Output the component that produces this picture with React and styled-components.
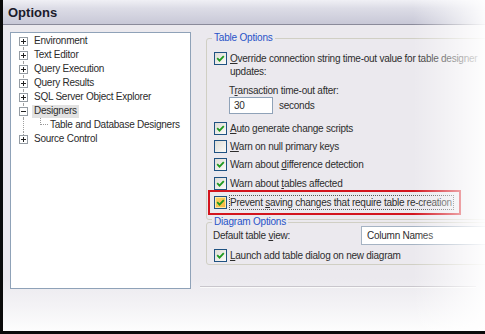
import React from 'react';
import styled, { createGlobalStyle } from 'styled-components';

const Global = createGlobalStyle`
  html, body { margin: 0; padding: 0; background: #fff; overflow: hidden; }
  body { font-family: "Liberation Sans", Arial, sans-serif; }
`;

const Window = styled.div`
  position: relative;
  width: 485px;
  height: 334px;
  box-sizing: border-box;
  border-left: 3px solid #0b0b0b;
  border-bottom: 3px solid #0b0b0b;
  display: flex;
  flex-direction: column;
  overflow: hidden;
  background: linear-gradient(to bottom, #ebe9ee 0%, #ebe9ee 84%, #f3f2f5 92%, #fdfdfd 100%);
`;

const TitleBar = styled.div`
  height: 25px;
  flex: none;
  box-sizing: border-box;
  background: linear-gradient(to bottom, #f0f0f5 0%, #dcdce6 35%, #c8c8d7 100%);
  border-bottom: 1px solid #8a8a9a;
  display: flex;
  align-items: center;
  padding-left: 5px;
  font-weight: bold;
  font-size: 13px;
  color: #1b1b2b;
`;

const Body = styled.div`
  flex: 1;
  display: flex;
  align-items: flex-start;
`;

const Tree = styled.div`
  margin: 7px 0 0 7px;
  width: 181px;
  height: 257px;
  box-sizing: border-box;
  background: #fff;
  border: 1px solid #8fa2b8;
  padding-top: 1px;
  flex: none;
`;

const TreeRow = styled.div`
  position: relative;
  height: 14px;
  display: flex;
  align-items: center;
  white-space: nowrap;
  padding-left: ${p => (p.$child ? 29 : 8)}px;
  font-size: 10px;
  letter-spacing: -0.25px;
  color: #2b2b2b;
  &::before {
    content: '';
    position: absolute;
    left: 12px;
    top: ${p => (p.$first ? 7 : 0)}px;
    bottom: ${p => (p.$last ? 7 : 0)}px;
    border-left: 1px dotted #a0a0a0;
  }
`;

const Expander = styled.span`
  position: relative;
  z-index: 1;
  width: 9px;
  height: 9px;
  box-sizing: border-box;
  border: 1px solid #959ca3;
  background: #fff;
  display: flex;
  align-items: center;
  justify-content: center;
  margin-right: 4px;
  flex: none;
`;

const Connector = styled.span`
  width: 8px;
  height: 7px;
  margin-top: -7px;
  box-sizing: border-box;
  border-left: 1px dotted #9a9a9a;
  border-bottom: 1px dotted #9a9a9a;
  flex: none;
`;

const TreeText = styled.span`
  padding: 0 2px 1px 2px;
  line-height: 12px;
  background: ${p => (p.$selected ? '#e2e2e2' : 'transparent')};
`;

const Right = styled.div`
  margin-left: 15px;
  width: 290px;
  flex: none;
  display: flex;
  flex-direction: column;
`;

const Group = styled.div`
  position: relative;
  margin-top: ${p => p.$mt}px;
  border: 1px solid #d0cfc4;
  border-radius: 3px;
  padding: ${p => p.$pad};
  display: flex;
  flex-direction: column;
`;

const Legend = styled.span`
  position: absolute;
  top: -7px;
  left: 5px;
  padding: 0 2px;
  font-size: 10px;
  line-height: 12px;
  letter-spacing: -0.2px;
  color: #2853c8;
  background: #ebe9ee;
`;

const Row = styled.div`
  display: flex;
  align-items: ${p => (p.$center ? 'center' : 'flex-start')};
  gap: ${p => p.$gap || 3}px;
  margin-top: ${p => p.$mt || 0}px;
  margin-left: ${p => p.$ml || 0}px;
  font-size: 10px;
  line-height: 13px;
  letter-spacing: -0.25px;
  white-space: nowrap;
  color: #2d2d2d;
`;

const Box = styled.span`
  width: 13px;
  height: 13px;
  box-sizing: border-box;
  flex: none;
  border: 1px solid #1f5282;
  background: ${p =>
    p.$hot
      ? 'linear-gradient(135deg, #fbd86a 0%, #f6b13a 100%)'
      : 'linear-gradient(135deg, #dedcd5 0%, #fbfbf9 100%)'};
  display: flex;
  align-items: center;
  justify-content: center;
  box-shadow: ${p => (p.$hot ? 'inset 0 0 0 1px #fde9a6' : 'none')};
`;

const Label = styled.span`
  outline: ${p => (p.$focus ? '1px dotted #555' : 'none')};
  outline-offset: 0;
  padding-right: ${p => (p.$focus ? 1 : 0)}px;
`;

const TextField = styled.span`
  width: 44px;
  height: 17px;
  box-sizing: border-box;
  border: 1px solid #8fa2b8;
  background: #fff;
  padding-left: 4px;
  display: flex;
  align-items: center;
`;

const Combo = styled.span`
  width: 140px;
  height: 19px;
  box-sizing: border-box;
  border: 1px solid #a5b3c3;
  background: #fff;
  padding-left: 5px;
  display: flex;
  align-items: center;
`;

const FieldLabel = styled.span`
  width: 145px;
  flex: none;
`;

const FocusBox = styled.div`
  margin-left: -6px;
  width: 253px;
  box-sizing: border-box;
  border: 2px solid #d3141e;
  padding: 4px 4px;
`;

const Separator = styled.div`
  margin-top: 21px;
  margin-left: -6px;
  width: 276px;
  border-top: 1px solid #c9c6cc;
  border-bottom: 1px solid #fafafa;
`;

const Fade = styled.div`
  position: absolute;
  top: 0;
  right: 0;
  bottom: 0;
  width: 72px;
  pointer-events: none;
  background: linear-gradient(to right, rgba(255, 255, 255, 0) 0%, rgba(255, 255, 255, 0.35) 40%, rgba(255, 255, 255, 0.92) 100%);
`;

const Check = () => (
  <svg width="9" height="9" viewBox="0 0 9 9">
    <polyline points="1.2,4.2 3.5,6.6 7.8,2.1" fill="none" stroke="#1f9a1f" strokeWidth="1.8" />
  </svg>
);

const Sign = ({ minus }) => (
  <svg width="7" height="7" viewBox="0 0 7 7">
    <line x1="1" y1="3.5" x2="6" y2="3.5" stroke="#222" strokeWidth="1" />
    {!minus && <line x1="3.5" y1="1" x2="3.5" y2="6" stroke="#222" strokeWidth="1" />}
  </svg>
);

const CheckBox = ({ checked, hot }) => <Box $hot={hot}>{checked && <Check />}</Box>;

const treeItems = [
  { t: 'Environment' },
  { t: 'Text Editor' },
  { t: 'Query Execution' },
  { t: 'Query Results' },
  { t: 'SQL Server Object Explorer' },
  { t: 'Designers', open: true, selected: true },
  { t: 'Table and Database Designers', child: true },
  { t: 'Source Control' },
];

export default function App() {
  return (
    <>
      <Global />
      <Window>
        <TitleBar>Options</TitleBar>
        <Body>
          <Tree>
            {treeItems.map((it, i) => (
              <TreeRow key={it.t} $child={it.child} $first={i === 0} $last={i === treeItems.length - 1}>
                {it.child ? <Connector /> : (
                  <Expander><Sign minus={it.open} /></Expander>
                )}
                <TreeText $selected={it.selected}>{it.t}</TreeText>
              </TreeRow>
            ))}
          </Tree>
          <Right>
            <Group $mt={13} $pad="13px 0 4px 7px">
              <Legend>Table Options</Legend>
              <Row>
                <CheckBox checked />
                <span><u>O</u>verride connection string time-out value for table designer<br />updates:</span>
              </Row>
              <Row $mt={6} $ml={15}>
                <span>T<u>r</u>ansaction time-out after:</span>
              </Row>
              <Row $ml={15} $center $gap={6}>
                <TextField>30</TextField>
                <span>seconds</span>
              </Row>
              <Row $mt={8}>
                <CheckBox checked />
                <span><u>A</u>uto generate change scripts</span>
              </Row>
              <Row $mt={5}>
                <CheckBox />
                <span><u>W</u>arn on null primary keys</span>
              </Row>
              <Row $mt={5}>
                <CheckBox checked />
                <span>Warn about <u>d</u>ifference detection</span>
              </Row>
              <Row $mt={6}>
                <CheckBox checked />
                <span>Warn about <u>t</u>ables affected</span>
              </Row>
              <FocusBox>
                <Row>
                  <CheckBox checked hot />
                  <Label $focus>Prevent <u>s</u>aving changes that require table re-creation</Label>
                </Row>
              </FocusBox>
            </Group>
            <Group $mt={2} $pad="3px 0 2px 6px">
              <Legend>Diagram Options</Legend>
              <Row $center>
                <FieldLabel>Default table <u>v</u>iew:</FieldLabel>
                <Combo>Column Names</Combo>
              </Row>
              <Row $mt={4} $ml={1}>
                <CheckBox checked />
                <span><u>L</u>aunch add table dialog on new diagram</span>
              </Row>
            </Group>
            <Separator />
          </Right>
        </Body>
        <Fade />
      </Window>
    </>
  );
}
